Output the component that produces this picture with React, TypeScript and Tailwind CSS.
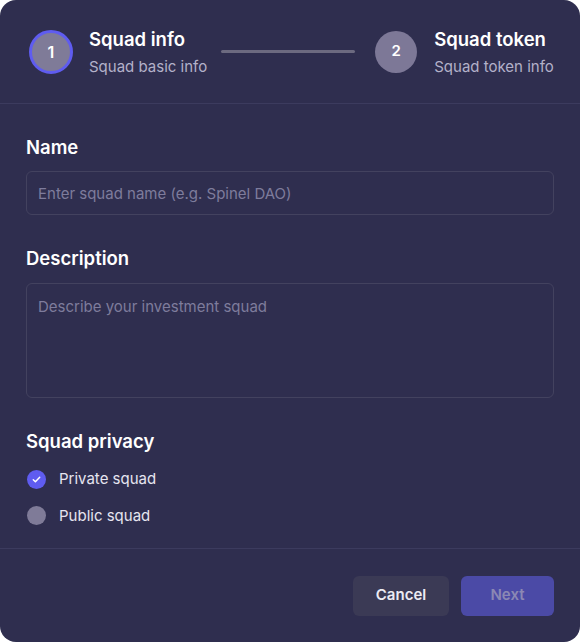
export default function App() {
	return (
		<div className="w-[580px] h-[642px] bg-white" style={{ fontFamily: 'Inter, "Noto Sans", sans-serif' }}>
			<div className="flex h-full flex-col rounded-2xl bg-[#2f2e4f] text-white">
				{/* steps */}
				<div className="flex h-[104px] items-center border-b border-[#3c3b5e] px-[29px]">
					<div className="flex h-[44px] w-[44px] shrink-0 items-center justify-center rounded-full border-[3px] border-[#5f5cf0] bg-[#7f7b98] text-[16px] font-semibold">
						1
					</div>
					<div className="ml-[16px] flex shrink-0 flex-col whitespace-nowrap">
						<span className="text-[18.5px] font-semibold leading-[24px]">Squad info</span>
						<span className="mt-[6px] text-[15px] leading-[20px] text-[#b3b1c9]">Squad basic info</span>
					</div>
					<div className="ml-[14px] mr-[15px] h-[3px] w-[134px] shrink-0 rounded bg-[#6c6a80]" />
					<div className="ml-[5px] flex h-[42px] w-[42px] shrink-0 items-center justify-center rounded-full bg-[#7d7897] text-[15px] font-semibold">
						2
					</div>
					<div className="ml-[17px] flex shrink-0 flex-col whitespace-nowrap">
						<span className="text-[18.5px] font-semibold leading-[24px]">Squad token</span>
						<span className="mt-[6px] text-[15px] leading-[20px] text-[#b3b1c9]">Squad token info</span>
					</div>
				</div>

				{/* form */}
				<div className="flex flex-1 flex-col border-b border-[#3c3b5e] px-[26px]">
					<label className="mt-[31px] text-[18.5px] font-semibold leading-[24px]">Name</label>
					<input
						className="mt-[12px] h-[44px] rounded-md border border-[#43425f] bg-transparent px-[11px] text-[15px] outline-none placeholder:text-[#7e7c9c]"
						placeholder="Enter squad name (e.g. Spinel DAO)"
					/>
					<label className="mt-[31px] text-[18.5px] font-semibold leading-[24px]">Description</label>
					<textarea
						className="mt-[13px] h-[115px] resize-none rounded-md border border-[#43425f] bg-transparent px-[11px] py-[12px] text-[15px] outline-none placeholder:text-[#7e7c9c]"
						placeholder="Describe your investment squad"
					/>
					<span className="mt-[31px] text-[18.5px] font-semibold leading-[24px]">Squad privacy</span>
					<div className="mt-[15px] flex items-center gap-[13px]">
						<span className="ml-[1px] flex h-[19px] w-[19px] items-center justify-center rounded-full bg-[#5f5cf0]">
							<svg width="11" height="11" viewBox="0 0 12 12" fill="none">
								<path d="M2.5 6.2l2.3 2.2 4.7-4.8" stroke="white" strokeWidth="1.6" strokeLinecap="round" strokeLinejoin="round" />
							</svg>
						</span>
						<span className="text-[15px] text-[#e6e5f0]">Private squad</span>
					</div>
					<div className="mt-[14px] flex items-center gap-[13px]">
						<span className="ml-[1px] h-[19px] w-[19px] rounded-full bg-[#7f7b98]" />
						<span className="text-[15px] text-[#e6e5f0]">Public squad</span>
					</div>
				</div>

				{/* footer */}
				<div className="flex h-[93px] items-center justify-end gap-[12px] px-[26px]">
					<button className="h-[40px] w-[96px] rounded-md bg-[#3b3a55] text-[15px] font-semibold text-[#ecebf3]">Cancel</button>
					<button className="h-[40px] w-[93px] rounded-md bg-[#4b4aa6] text-[15px] font-semibold text-[#8b88b4]">Next</button>
				</div>
			</div>
		</div>
	)
}
